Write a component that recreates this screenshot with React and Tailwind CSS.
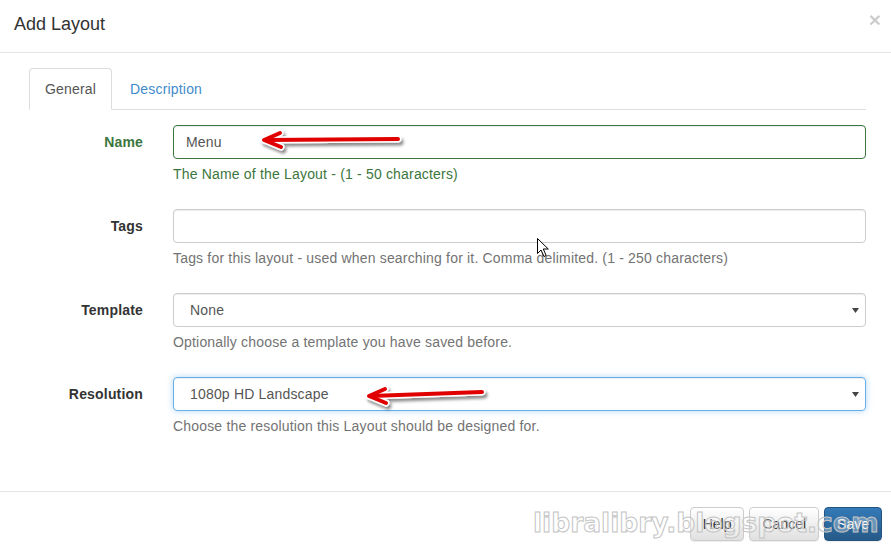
import React from "react"

const font = { fontFamily: '"Liberation Sans", Arial, sans-serif' }

const Caret = () => (
    <svg width="7" height="5" viewBox="0 0 7 5">
        <path d="M0 0 L7 0 L3.5 5 Z" fill="#444" />
    </svg>
)

const Arrow = ({ tip, tail, up, down }) => (
    <g filter="url(#shadow)">
        <g stroke="#ffffff" strokeWidth="7" strokeLinecap="round" strokeLinejoin="round" fill="none">
            <line x1={tip[0] + 2} y1={tip[1]} x2={tail[0]} y2={tail[1]} />
            <polyline points={`${up[0]},${up[1]} ${tip[0]},${tip[1]} ${down[0]},${down[1]}`} />
        </g>
        <g stroke="#e00000" strokeWidth="4" strokeLinecap="round" strokeLinejoin="round" fill="none">
            <line x1={tip[0] + 2} y1={tip[1]} x2={tail[0]} y2={tail[1]} />
            <polyline points={`${up[0]},${up[1]} ${tip[0]},${tip[1]} ${down[0]},${down[1]}`} />
        </g>
    </g>
)

const FormRow = ({ label, success, children, help }) => (
    <div className="grid grid-cols-[114px_1fr] gap-x-[30px] mb-[15px]">
        <label className={`text-right font-bold pt-[7px] leading-[20px] ${success ? "text-[#3c763d]" : "text-[#333]"}`}>
            {label}
        </label>
        <div>
            {children}
            <p className={`mt-[5px] mb-[10px] leading-[20px] ${success ? "text-[#3c763d]" : "text-[#737373]"}`}>
                {help}
            </p>
        </div>
    </div>
)

export default function App() {
    return (
        <div className="relative w-[891px] h-[550px] overflow-hidden bg-white text-[14px] text-[#333]" style={font}>
            {/* HEADER */}
            <div className="h-[53px] border-b border-[#e5e5e5] flex items-start justify-between pl-[14px] pr-[10px]">
                <h4 className="mt-[14px] text-[18px] leading-[20px]">Add Layout</h4>
                <span className="mt-[9px] text-[21px] leading-none font-bold text-black opacity-20">×</span>
            </div>

            {/* BODY */}
            <div className="pl-[29px] pr-[25px] pt-[15px] pb-[30px] tracking-[0.18px]">
                <ul className="flex border-b border-[#ddd]">
                    <li className="-mb-px mr-[2px] px-[15px] py-[10px] leading-[20px] text-[#555] bg-white border border-[#ddd] border-b-transparent rounded-t-[4px]">
                        General
                    </li>
                    <li className="-mb-px px-[15px] py-[10px] leading-[20px] text-[#428bca] border border-transparent">
                        Description
                    </li>
                </ul>

                <div className="mt-[15px]">
                    <FormRow label="Name" success help="The Name of the Layout - (1 - 50 characters)">
                        <div className="h-[34px] border border-[#3c763d] rounded-[4px] px-[12px] py-[6px] leading-[20px] text-[#555] shadow-[inset_0_1px_1px_rgba(0,0,0,0.075)]">
                            Menu
                        </div>
                    </FormRow>
                    <FormRow label="Tags" help="Tags for this layout - used when searching for it. Comma delimited. (1 - 250 characters)">
                        <div className="h-[34px] border border-[#ccc] rounded-[4px] shadow-[inset_0_1px_1px_rgba(0,0,0,0.075)]" />
                    </FormRow>
                    <FormRow label="Template" help="Optionally choose a template you have saved before.">
                        <div className="h-[34px] border border-[#ccc] rounded-[4px] pl-[16px] pr-[6px] flex items-center justify-between leading-[20px] text-[#555] shadow-[inset_0_1px_1px_rgba(0,0,0,0.075)]">
                            <span>None</span>
                            <Caret />
                        </div>
                    </FormRow>
                    <FormRow label="Resolution" help="Choose the resolution this Layout should be designed for.">
                        <div className="h-[34px] border border-[#66afe9] rounded-[4px] pl-[16px] pr-[6px] flex items-center justify-between leading-[20px] text-[#555] shadow-[inset_0_1px_1px_rgba(0,0,0,0.075),0_0_6px_rgba(102,175,233,0.5)]">
                            <span>1080p HD Landscape</span>
                            <Caret />
                        </div>
                    </FormRow>
                </div>
            </div>

            {/* FOOTER */}
            <div className="border-t border-[#e5e5e5] pt-[15px] pb-[15px] pr-[9px] flex justify-end gap-[5px]">
                <button className="h-[34px] px-[12px] border border-[#ccc] rounded-[4px] bg-linear-to-b from-white to-[#e0e0e0] text-[#333] leading-[20px] shadow-[0_1px_1px_rgba(0,0,0,0.075)]">
                    Help
                </button>
                <button className="h-[34px] px-[12px] border border-[#ccc] rounded-[4px] bg-linear-to-b from-white to-[#e0e0e0] text-[#333] leading-[20px] shadow-[0_1px_1px_rgba(0,0,0,0.075)]">
                    Cancel
                </button>
                <button className="h-[34px] px-[12px] border border-[#245580] rounded-[4px] bg-linear-to-b from-[#337ab7] to-[#265a88] text-white leading-[20px] shadow-[0_1px_1px_rgba(0,0,0,0.075)]">
                    Save
                </button>
            </div>

            {/* WATERMARK */}
            <div
                className="absolute left-[533px] top-[510px] text-[26.5px] font-bold leading-none text-[rgba(255,255,255,0.3)] [-webkit-text-stroke:1px_#c4c4c4] pointer-events-none whitespace-nowrap"
                style={{ fontFamily: '"DejaVu Sans", Verdana, sans-serif' }}
            >
                libralibry.blogspot.com
            </div>

            {/* ANNOTATIONS */}
            <svg className="absolute left-0 top-0 pointer-events-none" width="891" height="550" viewBox="0 0 891 550">
                <defs>
                    <filter id="shadow" x="-10%" y="-50%" width="130%" height="250%">
                        <feDropShadow dx="2" dy="3" stdDeviation="1.5" floodColor="#000" floodOpacity="0.45" />
                    </filter>
                </defs>
                <Arrow tip={[264, 140]} tail={[398, 139]} up={[280, 133]} down={[281, 147]} />
                <Arrow tip={[369, 396]} tail={[482, 392]} up={[385, 389]} down={[386, 403]} />
                {/* mouse cursor */}
                <path
                    d="M537.5 238.5 L537.5 253.5 L541 250 L544 256.5 L546.2 255.5 L543.3 249 L548.3 249 Z"
                    fill="#fff"
                    stroke="#000"
                    strokeWidth="1"
                    strokeLinejoin="round"
                />
            </svg>
        </div>
    )
}
